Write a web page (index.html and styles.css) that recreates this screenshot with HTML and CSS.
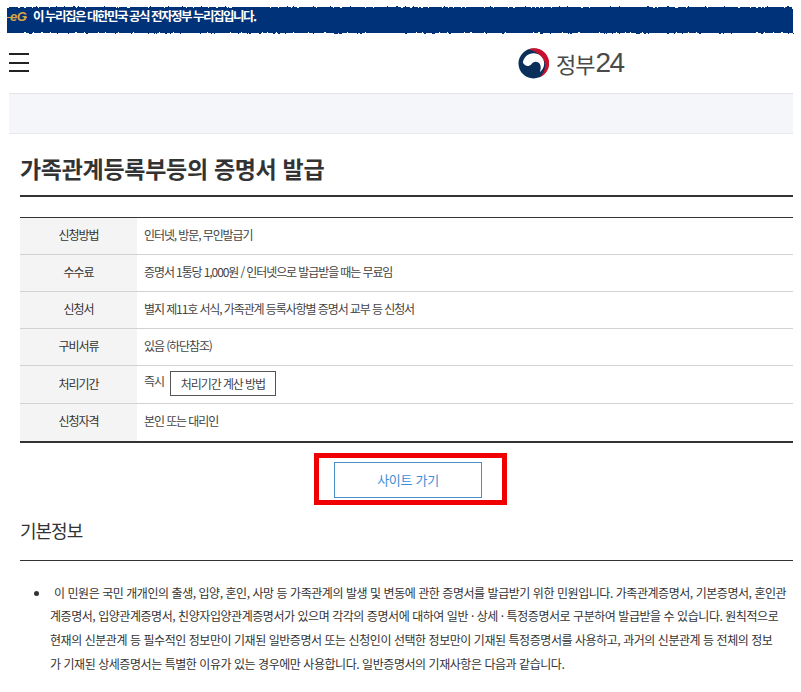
FILE: index.html
```html
<!DOCTYPE html>
<html lang="ko">
<head>
<meta charset="utf-8">
<title>가족관계등록부등의 증명서 발급</title>
<link rel="stylesheet" href="styles.css">
</head>
<body>
<svg class="defs" width="0" height="0" aria-hidden="true">
  <filter id="rough" x="-2%" y="-30%" width="104%" height="160%">
    <feTurbulence type="fractalNoise" baseFrequency="0.35" numOctaves="2" seed="4"/>
    <feDisplacementMap in="SourceGraphic" scale="3"/>
  </filter>
</svg>
<div class="page">
  <div class="banner">
    <span class="banner-bg"></span>
    <span class="eg">eG</span>
    <span class="banner-text">이 누리집은 대한민국 공식 전자정부 누리집입니다.</span>
  </div>
  <div class="inner">
    <header class="header">
      <div class="burger"><i></i><i></i><i></i></div>
      <div class="logo">
        <svg class="mark" viewBox="0 0 32 32" width="31" height="31">
          <circle cx="16" cy="16" r="15.500" fill="#0b2f5b"/>
          <path d="M11 1.200A15.500 15.500 0 0 1 22 30.500C27 26 29 20 27.500 14.500C25.500 8 19 3.500 11 1.200Z" fill="#c8102e"/>
          <path d="M5 15C6 9 11 5 17 5.500C23 6 27 11 27 16C27 20 25 23 22.500 25C24 21 24 17 21 15C18 13 15 15 13.500 17C11 19.500 7 19 5 15Z" fill="#fff"/>
        </svg>
        <span class="logo-text">정부<span class="logo-num">24</span></span>
      </div>
    </header>
    <div class="band"></div>
  </div>
  <main class="content">
    <h1 class="title">가족관계등록부등의 증명서 발급</h1>
    <table class="info">
      <tr><th>신청방법</th><td>인터넷, 방문, 무인발급기</td></tr>
      <tr><th>수수료</th><td>증명서 1통당 1,000원 / 인터넷으로 발급받을 때는 무료임</td></tr>
      <tr><th>신청서</th><td>별지 제11호 서식, 가족관계 등록사항별 증명서 교부 등 신청서</td></tr>
      <tr><th>구비서류</th><td>있음 (하단참조)</td></tr>
      <tr class="tall"><th>처리기간</th><td><span class="now">즉시</span><button class="calc" type="button">처리기간 계산 방법</button></td></tr>
      <tr class="tall"><th>신청자격</th><td>본인 또는 대리인</td></tr>
    </table>
    <div class="actions">
      <div class="highlight"><a class="site" href="#">사이트 가기</a></div>
    </div>
    <h2 class="sub">기본정보</h2>
    <ul class="desc">
      <li><span class="lead">이 민원은 국민 개개인의 출생, 입양, 혼인, 사망 등 가족관계의 발생 및 변동에 관한 증명서를 발급받기 위한 민원입니다. 가족관계증명서, 기본증명서, 혼인관</span><br>계증명서, 입양관계증명서, 친양자입양관계증명서가 있으며 각각의 증명서에 대하여 일반 · 상세 · 특정증명서로 구분하여 발급받을 수 있습니다. 원칙적으로<br>현재의 신분관계 등 필수적인 정보만이 기재된 일반증명서 또는 신청인이 선택한 정보만이 기재된 특정증명서를 사용하고, 과거의 신분관계 등 전체의 정보<br>가 기재된 상세증명서는 특별한 이유가 있는 경우에만 사용합니다. 일반증명서의 기재사항은 다음과 같습니다.</li>
    </ul>
  </main>
</div>
</body>
</html>
```
FILE: styles.css
```css
* { box-sizing: border-box; }
html, body { margin: 0; background: #fff; }
body {
  height: 692px;
  overflow: hidden;
  padding: 7px 8px 0 7px;
  font-family: "Noto Sans CJK KR", "Noto Sans", sans-serif;
  color: #333;
}
.defs { position: absolute; }
.page { width: 786px; }
.banner {
  position: relative;
  height: 26px;
  display: flex;
  align-items: center;
  color: #fff;
}
.banner-bg {
  position: absolute;
  inset: 0;
  background: #03327a;
  filter: url(#rough);
}
.eg {
  position: relative;
  width: 26px;
  padding-left: 3px;
  margin-top: -7px;
  font: italic 700 13px/1 "Liberation Sans", sans-serif;
  letter-spacing: -0.5px;
  color: #d9a441;
}
.eg::before, .eg::after {
  content: "";
  position: absolute;
  top: 7px;
  height: 1px;
  background: #d9a441;
}
.eg::before { left: 0; width: 4px; }
.eg::after { left: 17px; width: 3px; }
.banner-text {
  position: relative;
  font-size: 12.5px;
  font-weight: 700;
  letter-spacing: -1.5px;
  line-height: 1;
  margin-top: -7px;
}
.inner { margin-left: 2px; }
.header {
  height: 61px;
  border-bottom: 1px solid #e3e5ea;
  display: flex;
  align-items: center;
}
.burger {
  width: 20px;
  display: flex;
  flex-direction: column;
  gap: 6.5px;
  margin-top: -1px;
}
.burger i {
  display: block;
  height: 2px;
  background: #222;
}
.logo {
  display: flex;
  align-items: center;
  gap: 7px;
  margin-left: 489px;
}
.mark { display: block; }
.logo-text {
  display: flex;
  align-items: center;
  font-size: 22px;
  line-height: 1;
  color: #4a4a4a;
  letter-spacing: -1px;
}
.logo-num {
  font: 28px/1 "Liberation Sans", sans-serif;
  letter-spacing: -1.5px;
  margin-left: 1px;
}
.band {
  height: 40px;
  background: #f5f6fa;
  border-bottom: 1px solid #e8e9ee;
}
.content { padding-left: 13px; }
.title {
  margin: 0;
  height: 63px;
  padding-top: 17px;
  border-bottom: 2px solid #333;
  font-size: 23px;
  line-height: 34px;
  font-weight: 700;
  letter-spacing: -0.3px;
  color: #333;
}
.info {
  width: 100%;
  margin-top: 20px;
  border-collapse: collapse;
  border-top: 1px solid #333;
  border-bottom: 2px solid #333;
  font-size: 12px;
  letter-spacing: -1.1px;
}
.info th, .info td {
  height: 37px;
  padding: 0 0 3px;
  border-top: 1px solid #d2d2d2;
  font-weight: 400;
}
.info .tall th, .info .tall td { height: 38px; }
.info tr:first-child th, .info tr:first-child td { border-top: 0; }
.info th {
  width: 117px;
  background: #f4f4f4;
  text-align: center;
  color: #333;
}
.info td { padding-left: 7px; color: #444; }
.now { position: relative; top: 0; }
.calc {
  margin-left: 6px;
  height: 25px;
  width: 106px;
  padding: 0;
  background: #fff;
  border: 1px solid #555;
  font: inherit;
  letter-spacing: -1.1px;
  color: #444;
  vertical-align: middle;
}
.actions {
  display: flex;
  padding: 10px 0 0 294px;
}
.highlight {
  border: 5px solid #f00000;
  padding: 4px 20px 2px 15px;
}
.site {
  display: flex;
  align-items: center;
  justify-content: center;
  width: 148px;
  height: 36px;
  border: 1px solid #4a90c8;
  font-size: 13px;
  letter-spacing: -0.3px;
  color: #3d8ed8;
  text-decoration: none;
}
.sub {
  margin: 0;
  height: 56px;
  padding-top: 12px;
  border-bottom: 1px solid #333;
  font-size: 18px;
  line-height: 26px;
  font-weight: 400;
  letter-spacing: -1px;
  color: #333;
}
.desc {
  margin: 0;
  padding: 20px 0 0 30px;
  list-style: disc;
  font-size: 12px;
  line-height: 23.7px;
  letter-spacing: -0.45px;
  color: #333;
  white-space: nowrap;
}
.lead { margin-left: 4px; }
```
